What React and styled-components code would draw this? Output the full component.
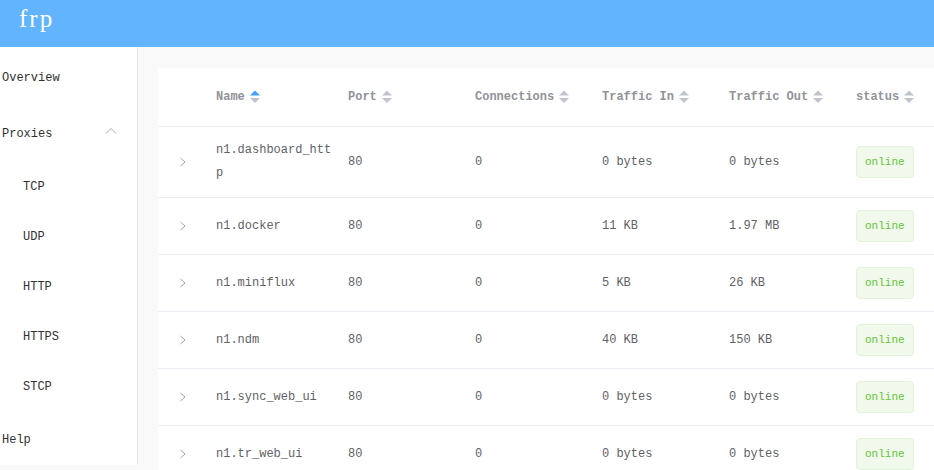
import React from 'react'
import styled, { createGlobalStyle } from 'styled-components'

const proxies = [
    { name: 'n1.dashboard_http', port: 80, conns: 0, trafficIn: '0 bytes', trafficOut: '0 bytes', status: 'online' },
    { name: 'n1.docker', port: 80, conns: 0, trafficIn: '11 KB', trafficOut: '1.97 MB', status: 'online' },
    { name: 'n1.miniflux', port: 80, conns: 0, trafficIn: '5 KB', trafficOut: '26 KB', status: 'online' },
    { name: 'n1.ndm', port: 80, conns: 0, trafficIn: '40 KB', trafficOut: '150 KB', status: 'online' },
    { name: 'n1.sync_web_ui', port: 80, conns: 0, trafficIn: '0 bytes', trafficOut: '0 bytes', status: 'online' },
    { name: 'n1.tr_web_ui', port: 80, conns: 0, trafficIn: '0 bytes', trafficOut: '0 bytes', status: 'online' },
]

const columns = [
    { label: 'Name', active: true },
    { label: 'Port' },
    { label: 'Connections' },
    { label: 'Traffic In' },
    { label: 'Traffic Out' },
    { label: 'status' },
]

const SortCaret = ({ active }) => (
    <Caret width="10" height="14" viewBox="0 0 10 14">
        <path d="M0 5.5 L5 0.5 L10 5.5 Z" fill={active ? '#409eff' : '#c0c4cc'} />
        <path d="M0 8 L5 13 L10 8 Z" fill="#c0c4cc" />
    </Caret>
)

const ExpandArrow = () => (
    <svg width="8" height="10" viewBox="0 0 8 10">
        <path d="M1.5 1 L6 5 L1.5 9" fill="none" stroke="#a0a4ab" strokeWidth="1" />
    </svg>
)

const ChevronUp = () => (
    <svg width="12" height="8" viewBox="0 0 12 8">
        <path d="M1 6.5 L6 1.5 L11 6.5" fill="none" stroke="#a8abb2" strokeWidth="1" />
    </svg>
)

const App = () => {
    return (
        <>
            <GlobalStyle />
            <Header>
                <Brand>frp</Brand>
            </Header>
            <Body>
                <Sidebar>
                    <MenuItem>Overview</MenuItem>
                    <MenuItem>
                        Proxies
                        <ChevronUp />
                    </MenuItem>
                    <SubItem>TCP</SubItem>
                    <SubItem>UDP</SubItem>
                    <SubItem>HTTP</SubItem>
                    <SubItem>HTTPS</SubItem>
                    <SubItem>STCP</SubItem>
                    <MenuItem>Help</MenuItem>
                </Sidebar>
                <Main>
                    <Card>
                        <Table>
                            <colgroup>
                                <col style={{ width: 48 }} />
                                <col style={{ width: 132 }} />
                                <col style={{ width: 127 }} />
                                <col style={{ width: 127 }} />
                                <col style={{ width: 127 }} />
                                <col style={{ width: 127 }} />
                                <col style={{ width: 127 }} />
                            </colgroup>
                            <thead>
                                <tr>
                                    <Th />
                                    {columns.map((c) => (
                                        <Th key={c.label}>
                                            <HeadCell>
                                                {c.label}
                                                <SortCaret active={c.active} />
                                            </HeadCell>
                                        </Th>
                                    ))}
                                </tr>
                            </thead>
                            <tbody>
                                {proxies.map((p) => (
                                    <tr key={p.name}>
                                        <Td>
                                            <ExpandCell>
                                                <ExpandArrow />
                                            </ExpandCell>
                                        </Td>
                                        <Td><Cell>{p.name}</Cell></Td>
                                        <Td><Cell>{p.port}</Cell></Td>
                                        <Td><Cell>{p.conns}</Cell></Td>
                                        <Td><Cell>{p.trafficIn}</Cell></Td>
                                        <Td><Cell>{p.trafficOut}</Cell></Td>
                                        <Td>
                                            <Cell>
                                                <Tag>{p.status}</Tag>
                                            </Cell>
                                        </Td>
                                    </tr>
                                ))}
                            </tbody>
                        </Table>
                    </Card>
                </Main>
            </Body>
        </>
    )
}

export default App

const GlobalStyle = createGlobalStyle`
    html, body {
        margin: 0;
        padding: 0;
        overflow: hidden;
        background: #f9f9f9;
        font-family: "Liberation Mono", "DejaVu Sans Mono", monospace;
        font-size: 12px;
    }
`
const Header = styled.div`
    height: 47px;
    background: #62b4fe;
    display: flex;
    align-items: flex-start;
`
const Brand = styled.div`
    color: #fff;
    font-family: "Liberation Serif", serif;
    font-size: 25px;
    letter-spacing: 2px;
    line-height: 38px;
    padding-left: 19px;
`
const Body = styled.div`
    display: flex;
    align-items: flex-start;
`
const Sidebar = styled.div`
    width: 137px;
    flex-shrink: 0;
    background: #fff;
    border-right: 1px solid #e6e6e6;
`
const MenuItem = styled.div`
    height: 56px;
    box-sizing: border-box;
    display: flex;
    align-items: center;
    justify-content: space-between;
    padding: 6px 20px 0 2px;
    color: #303133;
    svg {
        margin-top: -6px;
    }
`
const SubItem = styled.div`
    height: 50px;
    box-sizing: border-box;
    display: flex;
    align-items: center;
    padding: 6px 0 0 23px;
    color: #303133;
`
const Main = styled.div`
    flex: 1;
    min-width: 0;
    padding: 21px 0 0 20px;
`
const Card = styled.div`
    background: #fff;
    width: 815px;
`
const Table = styled.table`
    width: 815px;
    table-layout: fixed;
    border-collapse: collapse;
`
const Th = styled.th`
    height: 58px;
    padding: 0;
    text-align: left;
    border-bottom: 1px solid #ebeef5;
    color: #909399;
    font-weight: bold;
`
const HeadCell = styled.div`
    display: flex;
    align-items: center;
    gap: 5px;
    padding: 0 10px;
    white-space: nowrap;
`
const Caret = styled.svg`
    flex-shrink: 0;
`
const Td = styled.td`
    padding: 12px 0;
    border-bottom: 1px solid #ebeef5;
    color: #606266;
    vertical-align: middle;
`
const Cell = styled.div`
    padding: 0 6px 0 10px;
    line-height: 23px;
    word-break: break-all;
`
const ExpandCell = styled.div`
    display: flex;
    justify-content: center;
    padding-left: 2px;
`
const Tag = styled.span`
    display: inline-flex;
    align-items: center;
    height: 30px;
    padding: 0 8px;
    background: #f0f9eb;
    border: 1px solid #e1f3d8;
    border-radius: 4px;
    color: #67c23a;
    font-size: 11px;
    box-sizing: content-box;
`
